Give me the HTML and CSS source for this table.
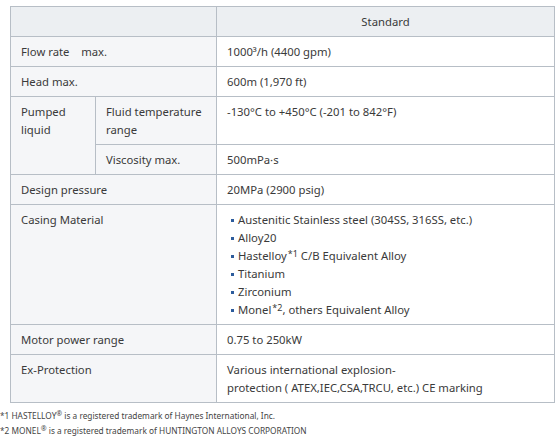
FILE: index.html
```html
<!DOCTYPE html>
<html>
<head>
<meta charset="utf-8">
<link rel="stylesheet" href="styles.css">
</head>
<body>
<div class="page">
<table class="spec">
  <colgroup>
    <col class="c1"><col class="c2"><col class="c3">
  </colgroup>
  <thead>
    <tr><th colspan="2" class="blank"></th><th>Standard</th></tr>
  </thead>
  <tbody>
    <tr><td colspan="2" class="lbl">Flow rate&nbsp;&nbsp;&nbsp; max.</td><td>1000³/h (4400 gpm)</td></tr>
    <tr><td colspan="2" class="lbl">Head max.</td><td>600m (1,970 ft)</td></tr>
    <tr><td rowspan="2" class="lbl">Pumped liquid</td><td class="lbl">Fluid temperature range</td><td>-130°C to +450°C (-201 to 842°F)</td></tr>
    <tr><td class="lbl">Viscosity max.</td><td>500mPa·s</td></tr>
    <tr><td colspan="2" class="lbl">Design pressure</td><td>20MPa (2900 psig)</td></tr>
    <tr><td colspan="2" class="lbl">Casing Material</td><td>
      <ul class="bul">
        <li>Austenitic Stainless steel (304SS, 316SS, etc.)</li>
        <li>Alloy20</li>
        <li>Hastelloy<sup>*1</sup> C/B Equivalent Alloy</li>
        <li>Titanium</li>
        <li>Zirconium</li>
        <li>Monel<sup>*2</sup>, others Equivalent Alloy</li>
      </ul>
    </td></tr>
    <tr><td colspan="2" class="lbl">Motor power range</td><td>0.75 to 250kW</td></tr>
    <tr><td colspan="2" class="lbl">Ex-Protection</td><td>Various international explosion-<br>protection ( ATEX,IEC,CSA,TRCU, etc.) CE marking</td></tr>
  </tbody>
</table>
<div class="notes">
  <p>*1 HASTELLOY<sup>®</sup> is a registered trademark of Haynes International, Inc.</p>
  <p>*2 MONEL<sup>®</sup> is a registered trademark of HUNTINGTON ALLOYS CORPORATION</p>
</div>
</div>
</body>
</html>
```
FILE: styles.css
```css
html, body { margin: 0; padding: 0; background: #fff; }
body { font-family: "Noto Sans", "Open Sans", sans-serif; color: #3a3a3a; }
.page { padding: 6px 6px 0 0; }
.spec {
  margin-left: 10px;
  width: 544px;
  border-collapse: collapse;
  table-layout: fixed;
  font-size: 11.3px;
  line-height: 18px;
}
.c1 { width: 85px; }
.c2 { width: 121px; }
.c3 { width: 338px; }
.spec th, .spec td {
  border: 1px solid #b7bec6;
  padding: 6px 10px 5px;
  text-align: left;
  vertical-align: top;
  font-weight: normal;
}
.spec thead th { background: #eceff2; text-align: center; height: 18px; }
.spec td.lbl { background: #f5f6f8; }
.spec td { background: #fff; }
.bul { list-style: none; margin: 0; padding: 0; }
.bul li { position: relative; padding-left: 11px; }
.bul li::before {
  content: "";
  position: absolute;
  left: 4px; top: 8px;
  width: 3px; height: 3px;
  background: #2d5c9c;
}
sup { font-size: 9px; line-height: 0; vertical-align: 3px; margin-left: 1px; }
.notes { padding-top: 5px; font-size: 8.3px; line-height: 15px; color: #444; }
.notes p { margin: 0; }
.notes sup { font-size: 7px; vertical-align: 3px; margin-left: 0; }
```
